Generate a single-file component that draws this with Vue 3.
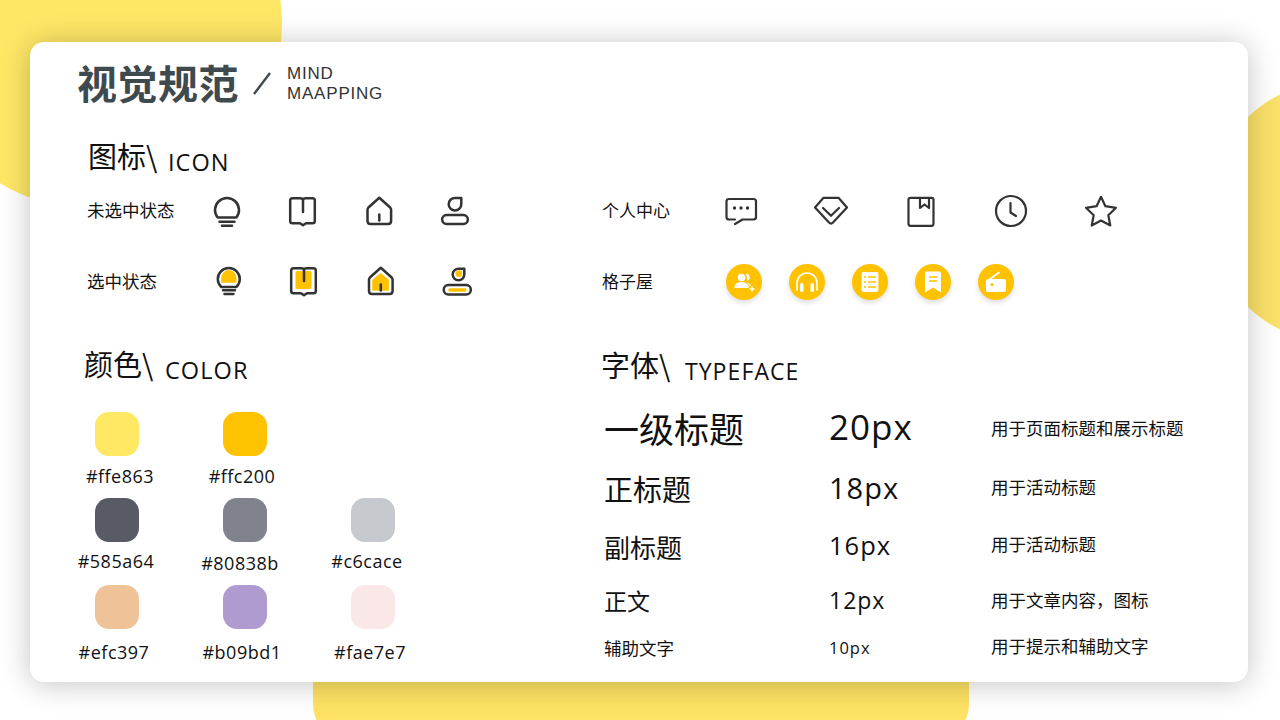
<script setup>
const bookPath =
  "M5.5 3.2H13c1.8 0 3 .6 3 1.8 0-1.200 1.200-1.800 3-1.800h6.500q2.300 0 2.300 2.300v20.500q0 2.300-2.300 2.300H19l-3 2-3-2H5.500q-2.300 0-2.300-2.300V5.500q0-2.300 2.300-2.300z";
const homePath =
  "M16.300 2.700 27.200 12.500q.9 1 .9 2.200V26q0 3-3 3H7.500q-3 0-3-3V14.700q0-1.200.9-2.200z";

const normalIcons = ["bulb", "book", "home", "seat"];
const personalIcons = ["chat", "gem", "note", "clock", "star"];
const houseIcons = ["users", "phones", "list", "mark", "radio"];

// x / y: how far the label sits from the middle of its chip
const colorRows = [
  [
    { hex: "#ffe863", x: 3, y: 1 },
    { hex: "#ffc200", x: -3, y: 1 },
  ],
  [
    { hex: "#585a64", x: -1, y: 0 },
    { hex: "#80838b", x: -5, y: 2 },
    { hex: "#c6cace", x: -6, y: 0 },
  ],
  [
    { hex: "#efc397", x: -3, y: 4 },
    { hex: "#b09bd1", x: -3, y: 4 },
    { hex: "#fae7e7", x: -3, y: 4 },
  ],
];

const fonts = [
  { name: "一级标题", size: "20px", note: "用于页面标题和展示标题", cls: "f1" },
  { name: "正标题", size: "18px", note: "用于活动标题", cls: "f2" },
  { name: "副标题", size: "16px", note: "用于活动标题", cls: "f3" },
  { name: "正文", size: "12px", note: "用于文章内容，图标", cls: "f4" },
  { name: "辅助文字", size: "10px", note: "用于提示和辅助文字", cls: "f5" },
];

function hexStyle(c) {
  return { marginLeft: c.x * 2 + "px", marginTop: 8 + c.y + "px" };
}
</script>

<template>
  <div class="page">
    <div class="blob blob-left"></div>
    <div class="blob blob-right"></div>
    <div class="blob blob-bottom"></div>

    <div class="card">
      <header class="head">
        <h1>视觉规范</h1>
        <svg class="slash" width="20" height="26" viewBox="0 0 20 26">
          <path d="M2 24 L18 3" />
        </svg>
        <div class="head-en">
          <span>MIND</span>
          <span>MAAPPING</span>
        </div>
      </header>

      <h2 class="title title-icon">图标\ <small>ICON</small></h2>

      <section class="icon-area">
        <div class="icon-col">
          <div class="icon-row">
            <span class="label">未选中状态</span>
            <div class="icons icons-n">
              <svg v-for="n in normalIcons" :key="n" class="ic" viewBox="0 0 32 32">
                <template v-if="n === 'bulb'">
                  <path d="M6.600 22.500H25.400A12 12 0 1 0 6.600 22.500Z" />
                  <path d="M8.500 26.700h15M11 30.700h10" />
                </template>
                <template v-if="n === 'book'">
                  <path :d="bookPath" />
                  <path d="M16 5v12" />
                </template>
                <template v-if="n === 'home'">
                  <path :d="homePath" />
                  <path d="M16.300 19.500v6" />
                </template>
                <template v-if="n === 'seat'">
                  <path d="M16 2.900h6.300v6.300a6.300 6.300 0 1 1-6.300-6.300z" />
                  <rect x="3.200" y="20" width="25.600" height="9" rx="4.300" />
                </template>
              </svg>
            </div>
          </div>

          <div class="icon-row row-b">
            <span class="label">选中状态</span>
            <div class="icons icons-on">
              <svg class="ic" viewBox="0 1 32 32">
                <path d="M8.300 22H23.300A11 11 0 1 0 8.300 22Z" />
                <path class="fill" d="M8.200 17.700v-4.500a7.650 8.200 0 0 1 15.300 0v4.500z" />
                <path d="M10 25.200h12M11.500 29h9" />
              </svg>
              <svg class="ic" viewBox="1 1 32 32">
                <path class="fill" d="M9 6h13q1.500 0 1.500 1.500v15q0 1.500-1.500 1.500H9q-1.500 0-1.500-1.500v-15Q7.500 6 9 6z" />
                <path :d="bookPath" />
                <path d="M16 4v12" />
              </svg>
              <svg class="ic" viewBox="0.5 1 32 32">
                <path class="fill" d="M16.300 8 23.500 14q.9.800.9 2v8.200q0 1.500-1.500 1.500H9.200q-1.500 0-1.500-1.500V16q0-1.200.9-2z" />
                <path :d="homePath" />
                <path d="M16.300 19.500v6" />
              </svg>
              <svg class="ic" viewBox="0 1 32 32">
                <path d="M17.500 3.700h5.800v5.800a5.800 5.800 0 1 1-5.800-5.800z" />
                <path class="fill" d="M17.500 5.500h3.500V9a3.300 3.300 0 1 1-3.500-3.500z" />
                <rect x="2.800" y="20" width="27" height="9.500" rx="4.500" />
                <rect class="fill" x="7.200" y="23.300" width="18.300" height="3.400" rx="1.700" />
              </svg>
            </div>
          </div>
        </div>

        <div class="icon-col">
          <div class="icon-row">
            <span class="label label-r">个人中心</span>
            <div class="icons icons-p">
              <svg v-for="n in personalIcons" :key="n" class="ic ic-thin" viewBox="0 0 32 32">
                <template v-if="n === 'chat'">
                  <path d="M10 24.500H4q-2.500 0-2.500-2.500V6.500Q1.500 4 4 4h24.500Q31 4 31 6.500V22q0 2.500-2.500 2.500H17.500L10 29" />
                  <circle class="dot" cx="9.500" cy="13" r="1.700" />
                  <circle class="dot" cx="16" cy="13" r="1.700" />
                  <circle class="dot" cx="22.500" cy="13" r="1.700" />
                </template>
                <template v-if="n === 'gem'">
                  <path d="M8.500 2.800H23.500L32 12.500 18 27.500q-2 2-4 0L0 12.500z" />
                  <path d="M8 13 16 20.800 24 13" />
                </template>
                <template v-if="n === 'note'">
                  <path d="M5.500 2.800h21q2 0 2 2v24q0 2-2 2h-21q-2 0-2-2v-24q0-2 2-2z" />
                  <path d="M15 3v10l4.500-3.500 4.500 3.500V3" />
                </template>
                <template v-if="n === 'clock'">
                  <circle cx="16" cy="16" r="15" />
                  <path d="M15.500 8v9.500l5.500 3.500" />
                </template>
                <template v-if="n === 'star'">
                  <path d="M16 1.800 20.400 11.200 31 12.800 23.300 20.200 25.300 30.500 16 25.500 6.700 30.500 8.700 20.200 1 12.800 11.600 11.200z" />
                </template>
              </svg>
            </div>
          </div>

          <div class="icon-row row-b">
            <span class="label label-r">格子屋</span>
            <div class="icons icons-h">
              <span v-for="n in houseIcons" :key="n" class="disc">
                <svg viewBox="0 0 24 24" width="24" height="24">
                  <template v-if="n === 'users'">
                    <circle class="w" cx="9.500" cy="7.500" r="3.800" />
                    <path class="w" d="M14 3.800a3.800 3.800 0 0 1 1.500 7.200z" />
                    <path class="w" d="M2.500 18c0-4 3-6 7-6s6 1.500 7.500 5l-1 1z" />
                    <path class="w" d="M15 12l4 3-1 1.500z" />
                    <path class="ws" d="M20 17v4M18 19h4" />
                  </template>
                  <template v-if="n === 'phones'">
                    <path class="ws" d="M2 20V13a10 10 0 0 1 20 0v7" />
                    <rect class="w" x="5" y="13" width="3.500" height="9" rx="1.700" />
                    <rect class="w" x="15.500" y="13" width="3.500" height="9" rx="1.700" />
                  </template>
                  <template v-if="n === 'list'">
                    <rect class="w" x="3.600" y="2" width="16.800" height="20" rx="2" />
                    <path class="ys" d="M6 7h2M10 7h8M6 12h2M10 12h8M6 17h2M10 17h8" />
                  </template>
                  <template v-if="n === 'mark'">
                    <path class="w" d="M5.500 1.500h13q1.500 0 1.500 1.500V22.500L12 17.500 4 22.500V3q0-1.500 1.500-1.500z" />
                    <path class="ys" d="M8 7h8M8 11h8" />
                  </template>
                  <template v-if="n === 'radio'">
                    <path class="ws" d="M6 9 15 2.500" />
                    <rect class="w" x="2" y="9" width="20" height="13" rx="2" />
                    <circle class="y" cx="8" cy="14.500" r="1.600" />
                  </template>
                </svg>
              </span>
            </div>
          </div>
        </div>
      </section>

      <section class="lower">
        <div class="colors">
          <h2 class="title title-color">颜色\ <small>COLOR</small></h2>
          <div v-for="(row, i) in colorRows" :key="i" class="swatch-row">
            <div v-for="c in row" :key="c.hex" class="swatch">
              <span class="chip" :style="{ background: c.hex }"></span>
              <span class="hex" :style="hexStyle(c)">{{ c.hex }}</span>
            </div>
          </div>
        </div>

        <div class="type">
          <h2 class="title title-type">字体\ <small>TYPEFACE</small></h2>
          <div v-for="f in fonts" :key="f.name" class="type-row" :class="f.cls">
            <span class="t-name">{{ f.name }}</span>
            <span class="t-size">{{ f.size }}</span>
            <span class="t-note">{{ f.note }}</span>
          </div>
        </div>
      </section>
    </div>
  </div>
</template>

<style scoped>
.page {
  position: relative;
  width: 1280px;
  height: 720px;
  overflow: hidden;
  background: #fff;
  font-family: "Open Sans", "Noto Sans CJK SC", sans-serif;
  color: #111;
  padding: 42px 32px 38px 30px;
  box-sizing: border-box;
}

.blob {
  position: absolute;
}

.blob-left {
  left: -90px;
  top: -162px;
  width: 372px;
  height: 372px;
  border-radius: 50%;
  background: #ffe766;
}

.blob-right {
  left: 1207px;
  top: 81px;
  width: 262px;
  height: 262px;
  border-radius: 50%;
  background: #fbe169;
}

.blob-bottom {
  left: 313px;
  top: 600px;
  width: 656px;
  height: 137px;
  border-radius: 0 0 32px 32px;
  background: #fde263;
}

.card {
  position: relative;
  height: 640px;
  background: #fff;
  border-radius: 14px;
  box-shadow: 0 2px 30px rgba(0, 0, 0, 0.24);
  box-sizing: border-box;
}

.head {
  display: flex;
  align-items: center;
  padding: 16px 0 0 47px;
  height: 48px;
}

.head h1 {
  margin: 0;
  font-size: 40px;
  line-height: 48px;
  font-weight: 700;
  letter-spacing: 0.5px;
  color: #3f4a4f;
  font-family: "Noto Sans CJK SC", sans-serif;
}

.slash {
  margin: 2px 0 0 13px;
}

.slash path {
  fill: none;
  stroke: #3f4a4f;
  stroke-width: 2.4;
}

.head-en {
  margin: 4px 0 0 15px;
  font-family: "Liberation Sans", sans-serif;
  font-size: 17px;
  line-height: 20px;
  color: #333;
  letter-spacing: 0.8px;
}

.head-en span {
  display: block;
}

.title {
  margin: 0;
  font-weight: 400;
  font-size: 29px;
  line-height: 40px;
  color: #111;
  font-family: "Noto Sans CJK SC", sans-serif;
}

.title small {
  font-size: 23.5px;
  line-height: 1;
  margin-left: 4px;
  vertical-align: -3px;
  font-family: "Open Sans", sans-serif;
  letter-spacing: 1.1px;
}

.title-icon {
  margin: 29px 0 0 58px;
}

.icon-area {
  display: flex;
  margin-top: 16px;
}

.icon-col {
  width: 572px;
}

.icon-row {
  display: flex;
  align-items: center;
  height: 40px;
}

.row-b {
  margin-top: 31px;
}

.label {
  width: 127px;
  padding-left: 57px;
  margin-bottom: 4px;
  font-size: 17.5px;
  font-family: "Noto Sans CJK SC", sans-serif;
}

.label-r {
  width: 124px;
  padding-left: 0;
  font-size: 17px;
}

.icons {
  display: flex;
  gap: 44px;
}

.icons-n {
  margin-left: -3px;
}

.icons-on {
  margin-left: -1.5px;
}

.ic {
  width: 32px;
  height: 32px;
  flex: none;
  overflow: visible;
}

.ic path,
.ic rect,
.ic circle {
  fill: none;
  stroke: #333;
  stroke-width: 2.5;
  stroke-linejoin: round;
  stroke-linecap: round;
}

.ic .fill {
  fill: #ffc200;
  stroke: none;
}

.ic-thin path,
.ic-thin circle {
  stroke-width: 2.2;
}

.ic .dot {
  fill: #333;
  stroke: none;
}

.icons-p {
  gap: 58px;
  margin-left: -1px;
}

.icons-h {
  gap: 27px;
}

.disc {
  width: 36px;
  height: 36px;
  border-radius: 50%;
  background: #ffc200;
  box-shadow: 0 3px 5px rgba(0, 0, 0, 0.13);
  display: flex;
  align-items: center;
  justify-content: center;
}

.w {
  fill: #fff;
}

.y {
  fill: #ffc200;
}

.ws {
  fill: none;
  stroke: #fff;
  stroke-width: 1.6;
  stroke-linecap: round;
}

.ys {
  fill: none;
  stroke: #ffc200;
  stroke-width: 1.3;
}

.lower {
  display: flex;
  margin-top: 41px;
}

.colors {
  width: 572px;
}

.title-color {
  margin: 0 0 29px 54px;
}

.title-color small {
  margin-left: 5px;
}

.swatch-row {
  display: flex;
  padding-left: 23px;
  height: 86px;
}

.swatch-row + .swatch-row {
  height: 87px;
}

.swatch {
  width: 128px;
  display: flex;
  flex-direction: column;
  align-items: center;
}

.chip {
  width: 44px;
  height: 44px;
  flex: none;
  border-radius: 14px;
}

.hex {
  font-size: 18px;
  line-height: 22px;
  letter-spacing: 0.5px;
}

.type {
  flex: 1;
}

.title-type {
  margin: 1px 0 12px -1px;
}

.title-type small {
  margin-left: 8px;
  font-size: 23px;
}

.type-row {
  display: flex;
  align-items: center;
  font-family: "Noto Sans CJK SC", sans-serif;
}

.t-name {
  width: 227px;
  padding-left: 2px;
  box-sizing: border-box;
}

.t-size {
  width: 162px;
  margin-bottom: 2px;
  font-family: "Open Sans", sans-serif;
  letter-spacing: 1px;
}

.t-note {
  font-size: 17.5px;
}

.f1 {
  height: 62px;
}

.f1 .t-name,
.f1 .t-size {
  font-size: 35px;
}

.f2 {
  height: 60px;
}

.f2 .t-name,
.f2 .t-size {
  font-size: 29px;
}

.f2 .t-note {
  margin-bottom: 4px;
}

.f3 {
  height: 56px;
}

.f3 .t-name {
  font-size: 26px;
}

.f3 .t-size {
  font-size: 25.5px;
}

.f3 .t-note {
  margin-bottom: 6px;
}

.f4 {
  height: 52px;
}

.f4 .t-name,
.f4 .t-size {
  font-size: 23px;
}

.f4 .t-size {
  margin-bottom: 0;
}

.f4 .t-note {
  margin-bottom: 2px;
}

.f5 {
  height: 42px;
}

.f5 .t-name {
  font-size: 17.5px;
}

.f5 .t-size {
  font-size: 16.5px;
  margin-bottom: 0;
}

.f5 .t-note {
  margin-bottom: 4px;
}
</style>

<style>
html,
body {
  margin: 0;
  background: #fff;
}
</style>
